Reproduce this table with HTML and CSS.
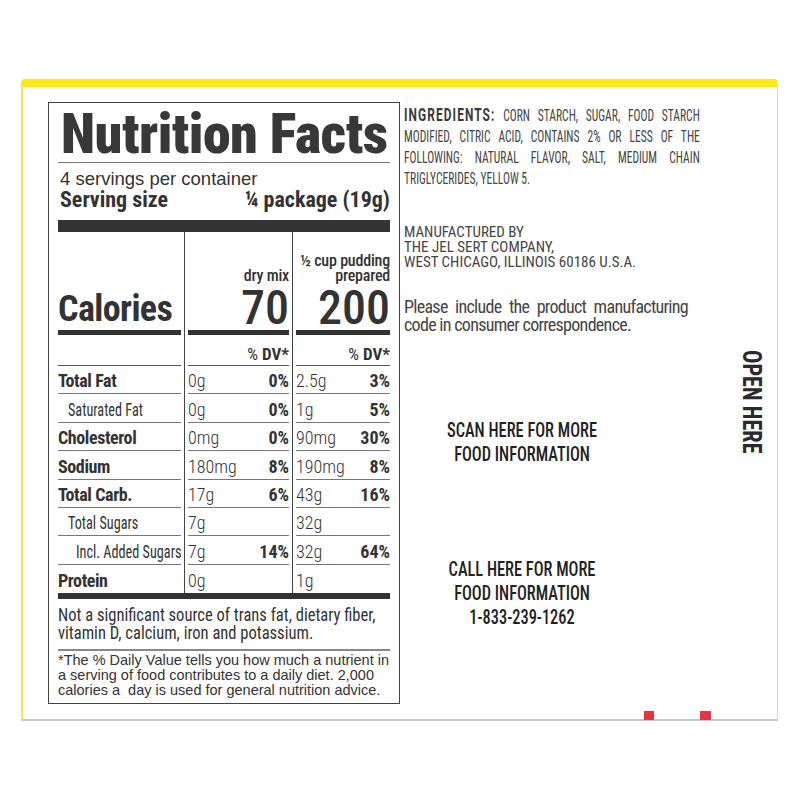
FILE: index.html
```html
<!DOCTYPE html>
<html lang="en">
<head>
<meta charset="utf-8">
<title>Nutrition Facts</title>
<link rel="stylesheet" href="styles.css">
</head>
<body>
<div class="package">
  <section class="nf">
    <h1 class="nf-title">Nutrition Facts</h1>
    <div class="nf-servings">4 servings per container</div>
    <div class="nf-size"><span>Serving size</span><span>¼ package (19g)</span></div>
    <div class="bar-thick"></div>
    <div class="nf-grid">
      <div class="c c1 cal"><div class="in cal-name">Calories</div></div>
      <div class="c c2 cal"><div class="in"><div class="cal-head">dry mix</div><div class="cal-num">70</div></div></div>
      <div class="c c3 cal"><div class="in"><div class="cal-head">½ cup pudding<br>prepared</div><div class="cal-num">200</div></div></div>

      <div class="c c1 dv"><div class="in"></div></div>
      <div class="c c2 dv"><div class="in"><span class="pct">%</span>&nbsp;DV*</div></div>
      <div class="c c3 dv"><div class="in"><span class="pct">%</span>&nbsp;DV*</div></div>

      <div class="c c1 r"><div class="in b">Total Fat</div></div>
      <div class="c c2 r"><div class="in"><span>0g</span><b>0%</b></div></div>
      <div class="c c3 r"><div class="in"><span>2.5g</span><b>3%</b></div></div>

      <div class="c c1 r"><div class="in sub"><span class="sq">Saturated Fat</span></div></div>
      <div class="c c2 r"><div class="in"><span>0g</span><b>0%</b></div></div>
      <div class="c c3 r"><div class="in"><span>1g</span><b>5%</b></div></div>

      <div class="c c1 r"><div class="in b">Cholesterol</div></div>
      <div class="c c2 r"><div class="in"><span>0mg</span><b>0%</b></div></div>
      <div class="c c3 r"><div class="in"><span>90mg</span><b>30%</b></div></div>

      <div class="c c1 r"><div class="in b">Sodium</div></div>
      <div class="c c2 r"><div class="in"><span>180mg</span><b>8%</b></div></div>
      <div class="c c3 r"><div class="in"><span>190mg</span><b>8%</b></div></div>

      <div class="c c1 r"><div class="in b">Total Carb.</div></div>
      <div class="c c2 r"><div class="in"><span>17g</span><b>6%</b></div></div>
      <div class="c c3 r"><div class="in"><span>43g</span><b>16%</b></div></div>

      <div class="c c1 r"><div class="in sub"><span class="sq">Total Sugars</span></div></div>
      <div class="c c2 r"><div class="in"><span>7g</span></div></div>
      <div class="c c3 r"><div class="in"><span>32g</span></div></div>

      <div class="c c1 r"><div class="in sub2"><span class="sq">Incl. Added Sugars</span></div></div>
      <div class="c c2 r"><div class="in"><span>7g</span><b>14%</b></div></div>
      <div class="c c3 r"><div class="in"><span>32g</span><b>64%</b></div></div>

      <div class="c c1 r last"><div class="in b">Protein</div></div>
      <div class="c c2 r last"><div class="in"><span>0g</span></div></div>
      <div class="c c3 r last"><div class="in"><span>1g</span></div></div>
    </div>
    <div class="bar-mid"></div>
    <p class="nf-note"><span class="ln">Not a significant source of trans fat, dietary fiber,</span><span class="ln">vitamin D, calcium, iron and potassium.</span></p>
    <p class="nf-foot"><span class="ln">*The % Daily Value tells you how much a nutrient in</span><span class="ln">a serving of food contributes to a daily diet. 2,000</span><span class="ln">calories a &nbsp;day is used for general nutrition advice.</span></p>
  </section>

  <section class="side">
    <div class="side-main">
      <p class="ingr"><span class="jl"><b>INGREDIENTS:</b> CORN STARCH, SUGAR, FOOD STARCH</span><span class="jl">MODIFIED, CITRIC ACID, CONTAINS 2% OR LESS OF THE</span><span class="jl">FOLLOWING: NATURAL FLAVOR, SALT, MEDIUM CHAIN</span><span class="ln">TRIGLYCERIDES, YELLOW 5.</span></p>
      <p class="mfr">MANUFACTURED BY<br>THE JEL SERT COMPANY,<br>WEST CHICAGO, ILLINOIS 60186 U.S.A.</p>
      <p class="please"><span class="jl">Please include the product manufacturing</span><span class="ln">code in consumer correspondence.</span></p>
      <p class="cta scan">SCAN HERE FOR MORE<br>FOOD INFORMATION</p>
      <p class="cta call">CALL HERE FOR MORE<br>FOOD INFORMATION<br>1-833-239-1262</p>
    </div>
    <div class="open">OPEN HERE</div>
  </section>

  <span class="mark m1"></span>
  <span class="mark m2"></span>
</div>
</body>
</html>
```
FILE: styles.css
```css
* { box-sizing: border-box; }

body {
  margin: 0;
  background: #fff;
  color: #333;
  font-family: "Roboto", "Liberation Sans", sans-serif;
}

.package {
  position: relative;
  margin: 79px 0 0 21px;
  width: 757px;
  height: 642px;
  border-top: 8px solid #f6ea12;
  border-left: 2px solid #efe94a;
  border-right: 1px solid #dedca6;
  border-bottom: 2px solid #c6c6c6;
  border-radius: 4px 4px 0 0;
  display: flex;
  align-items: flex-start;
}

.ln { display: block; white-space: nowrap; }

/* ---------- Nutrition facts panel ---------- */
.nf {
  margin: 15px 0 0 25px;
  width: 352px;
  flex: none;
  border: 1px solid #444;
  padding: 0 9px 4.5px;
}

.nf-title {
  margin: 3px 0 0;
  height: 57px;
  font-size: 56px;
  line-height: 56px;
  font-weight: 900;
  font-stretch: 75%;
  letter-spacing: -0.5px;
  color: #383838;
  padding-left: 3px;
  white-space: nowrap;
  border-bottom: 1px solid #777;
}

.nf-servings {
  padding-top: 6px;
  font-family: "Liberation Sans", sans-serif;
  font-size: 18.5px;
  line-height: 19px;
  padding-left: 2px;
}

.nf-size {
  margin-top: 1px;
  display: flex;
  justify-content: space-between;
  font-size: 22px;
  line-height: 22px;
  font-weight: 700;
  font-stretch: 75%;
  padding-left: 2px;
}

.bar-thick {
  margin-top: 9px;
  height: 12px;
  background: #333;
}

.nf-grid {
  display: grid;
  grid-template-columns: 126px 108px 98px;
  font-stretch: 75%;
}

.c1 { padding-right: 3px; }
.c2 { border-left: 1px solid #444; padding: 0 3px; }
.c3 { border-left: 1px solid #444; padding-left: 3px; }

.cal .in {
  height: 103px;
  border-bottom: 5px solid #333;
  display: flex;
  flex-direction: column;
  justify-content: flex-end;
  align-items: flex-end;
}

.cal .cal-name {
  align-items: flex-start;
  padding-bottom: 3px;
  font-size: 36px;
  line-height: 36px;
  font-weight: 700;
  letter-spacing: -0.6px;
}

.cal-head {
  text-align: right;
  font-size: 16px;
  line-height: 15px;
  font-weight: 500;
  letter-spacing: -0.2px;
}

.cal-num {
  margin-top: 3px;
  font-size: 48px;
  line-height: 44px;
  font-weight: 500;
}

.dv .in {
  height: 31px;
  border-bottom: 1px solid #555;
  display: flex;
  align-items: flex-end;
  justify-content: flex-end;
  padding-bottom: 3px;
  font-size: 17px;
  line-height: 16px;
  font-weight: 700;
}

.dv .pct { font-weight: 400; }

.r .in {
  height: 28.4px;
  border-bottom: 1px solid #777;
  display: flex;
  align-items: flex-end;
  justify-content: space-between;
  padding-bottom: 2px;
  font-size: 18px;
  line-height: 20px;
  font-weight: 300;
  white-space: nowrap;
}

.r.last .in { border-bottom: none; }

.r .in.b { font-weight: 700; letter-spacing: -0.4px; }
.r .in b { font-weight: 700; }
.r .in.sub { padding-left: 10px; font-weight: 400; }
.r .in.sub2 { padding-left: 18px; font-weight: 400; }

.sq {
  display: inline-block;
  transform: scaleX(0.79);
  transform-origin: 0 100%;
}

.bar-mid {
  height: 6px;
  background: #333;
}

.nf-note {
  margin: 6.5px 0 0;
  padding-bottom: 7.5px;
  border-bottom: 2px solid #888;
  font-size: 19px;
  line-height: 18px;
  font-weight: 400;
  font-stretch: 75%;
}

.nf-note .ln {
  transform: scaleX(0.87);
  transform-origin: 0 0;
}

.nf-foot {
  margin: 0;
  padding-top: 2px;
  font-family: "Liberation Sans", sans-serif;
  font-size: 14.5px;
  line-height: 15px;
}

/* ---------- Side panel ---------- */
.side {
  flex: 1;
  display: flex;
  padding: 17.7px 0 0 4px;
  color: #444;
  font-stretch: 75%;
}

.side-main {
  width: 296px;
  flex: none;
}

.side p { margin: 0; }

.jl {
  display: block;
  text-align: justify;
  text-align-last: justify;
  white-space: nowrap;
}

.ingr {
  width: 435px;
  transform: scaleX(0.68);
  transform-origin: 0 0;
  font-size: 17px;
  line-height: 21px;
  font-weight: 400;
}

.ingr b {
  font-weight: 700;
  font-stretch: 100%;
  font-size: 17.5px;
  letter-spacing: 1.6px;
  color: #3a3a3a;
}

.side .mfr {
  margin-top: 36px;
  font-size: 15px;
  line-height: 15px;
  font-weight: 400;
}

.side .please {
  margin-top: 28px;
  width: 284px;
  font-size: 18px;
  line-height: 18px;
  font-weight: 400;
  letter-spacing: -0.7px;
}

.side .cta {
  width: 302.6px;
  transform: scaleX(0.78);
  transform-origin: 0 0;
  text-align: center;
  font-size: 21px;
  line-height: 24px;
  font-weight: 500;
  color: #222;
}

.side .scan { margin-top: 84px; }
.side .call { margin-top: 91px; }

.open {
  margin: 245px 0 0 38.7px;
  writing-mode: vertical-rl;
  transform: scaleY(0.89);
  transform-origin: 0 0;
  font-size: 25px;
  line-height: 24px;
  font-weight: 700;
  color: #2a2a2a;
  white-space: nowrap;
}

.mark {
  position: absolute;
  top: 624px;
  width: 10px;
  height: 9px;
  background: #e8323f;
}

.m1 { left: 621px; }
.m2 { left: 677px; width: 11px; }
```
